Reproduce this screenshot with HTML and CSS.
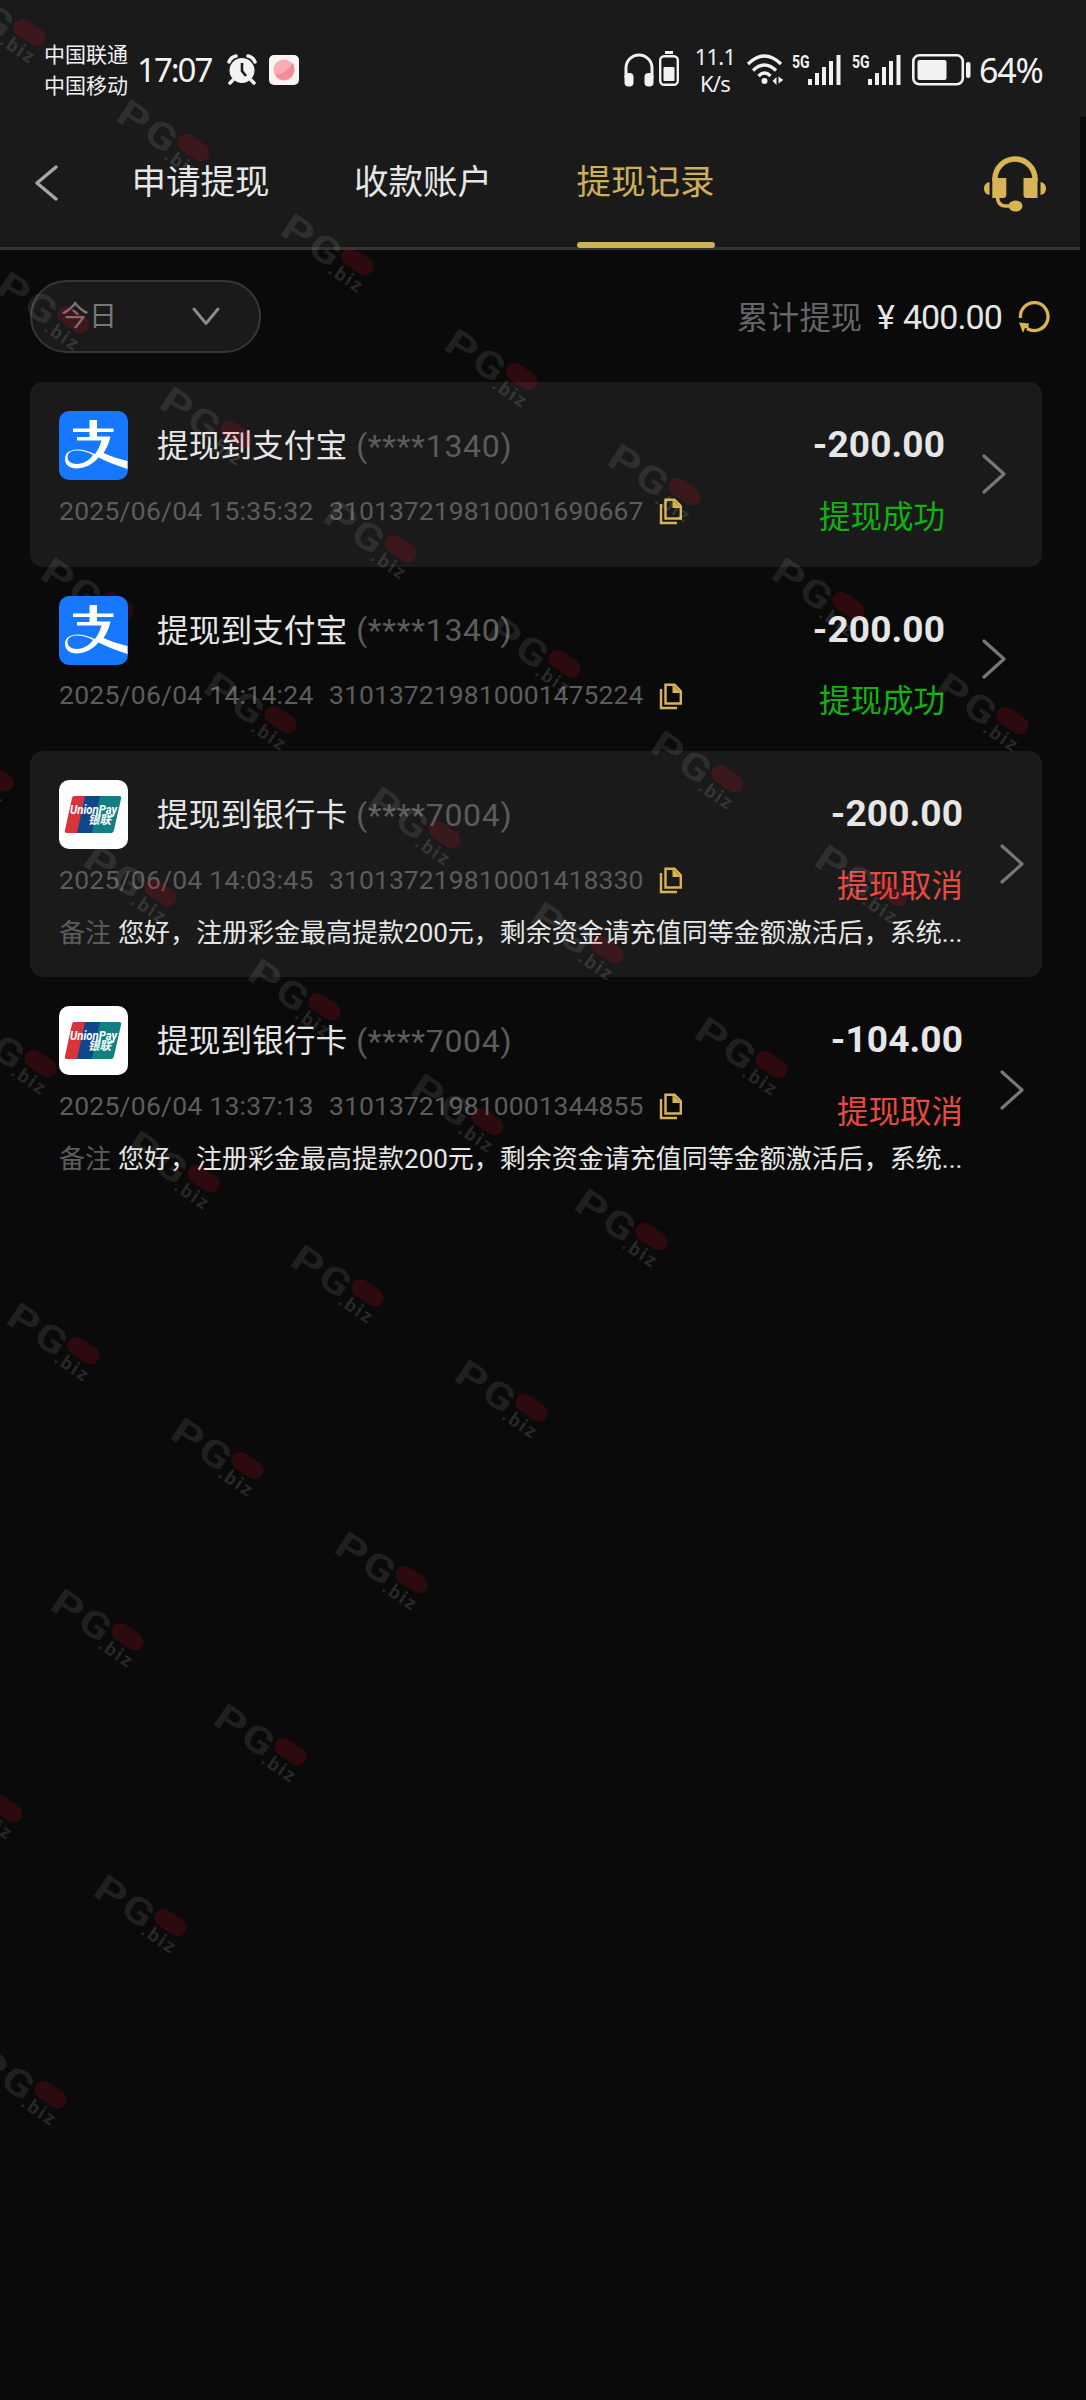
FILE: index.html
```html
<!DOCTYPE html>
<html lang="zh-CN">
<head>
<meta charset="utf-8">
<title>提现记录</title>
<link rel="stylesheet" href="styles.css">
</head>
<body>
<svg class="defs" width="0" height="0" aria-hidden="true">
  <defs>
    <symbol id="copy" viewBox="0 0 24 27"><path d="M2 6v19h16" fill="none" stroke="#d9b454" stroke-width="2.4"/><path d="M6.5 1.8h9l6.3 6.4v12.300H6.500z" fill="none" stroke="#d9b454" stroke-width="2.400"/><path d="M13.500 2v8h8.500z" fill="#d9b454"/></symbol>
    <symbol id="next" viewBox="0 0 24 40"><path d="M2 2l20 18L2 38" fill="none" stroke="#777" stroke-width="3.200" stroke-linecap="round" stroke-linejoin="round"/></symbol>
    <symbol id="alipay" viewBox="0 0 69 69"><rect width="69" height="69" rx="10" fill="#1677ff"/><path d="M30.500 9h7.500v8.500h16.500v3.500H38v4.500h13.500c-1.500 7-4 12-7 16.500 7 3 15 6 24 8v8c-11-3.500-21-7.500-29-11.500-6 7-14 11-22 11-7 0-11.500-4-11.500-9.500 0-6 5-9.500 12-9.500 6 0 12 2 18 4.500 3-4 5-8.500 6.500-13.500H18v-3.500h12.500V21H14v-3.500h16.500zM18 39.500c-6 0-9.500 2.500-9.500 6.500s3.500 7 9.500 7c6.500 0 12-3.500 16-9-5-3-10.500-4.500-16-4.500z" fill="#fff"/></symbol>
    <symbol id="unionpay" viewBox="0 0 69 69"><rect width="69" height="69" rx="10" fill="#fff"/><path d="M15 16h13l-9 37H8q-3 0-2-3l7-32q.5-2 2-2z" fill="#d8343c"/><path d="M26 16h16l-8 37H18z" fill="#11478a"/><path d="M41 16h19q3 0 2 3l-7 31q-.7 3-3 3H33z" fill="#128083"/><text x="11" y="34" textLength="47" lengthAdjust="spacingAndGlyphs" class="up-en">UnionPay</text><text x="29" y="43.500" textLength="23" lengthAdjust="spacingAndGlyphs" class="up-cn">银联</text></symbol>
    <symbol id="signal" viewBox="0 0 33 30"><path d="M0 24h4v6H0zM7 18h4v12H7zM14 12h4v18h-4zM21 6h4v24h-4zM28.500 0h4v30h-4z" fill="#f2f2f2"/></symbol>
    <g id="mark">
      <g transform="translate(-3 -2) rotate(34)">
        <text class="wm-big" transform="scale(1.300 1)" x="-1" y="0">P</text>
        <text class="wm-big" transform="scale(1.220 1)" x="26" y="0">G</text>
        <rect x="63" y="-30" width="35" height="18" rx="9" fill="#ff1028" fill-opacity=".14"/>
        <text class="wm-small" x="61" y="5">.biz</text>
      </g>
    </g>
  </defs>
</svg>

<div class="statusbar">
  <div class="carriers"><span>中国联通</span><span>中国移动</span></div>
  <span class="clock">17:07</span>
  <svg class="alarm" width="30" height="31" viewBox="0 0 30 31"><circle cx="15" cy="16.500" r="12.500" fill="#f2f2f2"/><path d="M2 8q2-5 7-6M28 8q-2-5-7-6" fill="none" stroke="#f2f2f2" stroke-width="3.500" stroke-linecap="round"/><path d="M6 26l-3 3M24 26l3 3" stroke="#f2f2f2" stroke-width="3.500" stroke-linecap="round"/><path d="M15 9v8l4 5" fill="none" stroke="#1a1a1a" stroke-width="2.600"/></svg>
  <svg class="app" width="30" height="30" viewBox="0 0 30 30"><rect width="30" height="30" rx="5" fill="#fbf3f4"/><circle cx="15" cy="15" r="10.500" fill="#f9aeb5"/><path d="M6 20q10 0 18-12 4 9-3 15-8 5-15-3z" fill="#f28c99"/></svg>
  <div class="status-right">
    <svg width="30" height="34" viewBox="0 0 30 34"><path d="M2 25V15a13 13 0 0 1 26 0v10" fill="none" stroke="#f2f2f2" stroke-width="3"/><rect x="0.500" y="20" width="9" height="13.500" rx="4" fill="#f2f2f2"/><rect x="20.500" y="20" width="9" height="13.500" rx="4" fill="#f2f2f2"/></svg>
    <svg class="cell" width="20" height="35" viewBox="0 0 20 35"><path d="M6 1.500h8" stroke="#f2f2f2" stroke-width="3"/><rect x="1.200" y="5.200" width="17.600" height="28.500" rx="4" fill="none" stroke="#f2f2f2" stroke-width="2.400"/><rect x="4.500" y="16" width="11" height="14" rx="1" fill="#f2f2f2"/></svg>
    <div class="speed"><span>11.1</span><span>K/s</span></div>
    <svg class="wifi" width="36" height="31" viewBox="0 0 36 31"><g fill="none" stroke="#f2f2f2" stroke-width="3.300"><path d="M1 10q16.500-16 33 0"/><path d="M6 16.500q11.500-11 23 0"/><path d="M11.500 22q6-6 12 0"/></g><circle cx="17.500" cy="27" r="3" fill="#f2f2f2"/><path d="M25.500 27l4-4v8zM31.500 22.500v7l5-3.500z" fill="#f2f2f2"/></svg>
    <span class="net">5G</span><svg class="bars" width="33" height="30"><use href="#signal"/></svg>
    <span class="net second">5G</span><svg class="bars" width="33" height="30"><use href="#signal"/></svg>
    <svg class="battery" width="60" height="32" viewBox="0 0 60 32"><rect x="1.300" y="1.300" width="49.500" height="29" rx="6" fill="none" stroke="#f2f2f2" stroke-width="2.600"/><rect x="5.500" y="6" width="29" height="20" rx="2" fill="#f2f2f2"/><rect x="54" y="8" width="4.500" height="16" rx="2" fill="#f2f2f2"/></svg>
    <span class="percent">64%</span>
  </div>
</div>

<header class="header">
  <svg class="back" width="23" height="36" viewBox="0 0 23 36"><path d="M21 2L2 18l19 16" fill="none" stroke="#a6a6a6" stroke-width="3.400" stroke-linecap="round" stroke-linejoin="round"/></svg>
  <nav class="tabs">
    <a>申请提现</a>
    <a>收款账户</a>
    <a class="active">提现记录</a>
  </nav>
  <svg class="service" width="62" height="56" viewBox="0 0 62 56" fill="#d9b454"><path d="M11 25v-2a20 20 0 0 1 40 0v2" fill="none" stroke="#d9b454" stroke-width="5.500"/><path d="M8.300 22h14v17q0 3-3 3h-11zM53.500 22h-14v17q0 3 3 3h11z"/><path d="M5.500 26v13Q0 38 0 32.500T5.500 26zM56.500 26v13q5.500-1 5.500-6.500T56.500 26z"/><path d="M13.500 40q0 10 8 10h6" fill="none" stroke="#d9b454" stroke-width="3.500"/><ellipse cx="31.500" cy="50" rx="7" ry="5.500"/></svg>
</header>

<div class="toolbar">
  <div class="filter"><span>今日</span><svg width="28" height="20" viewBox="0 0 28 20"><path d="M2 2l12 14.500L26 2" fill="none" stroke="#8b8b8b" stroke-width="2.900" stroke-linecap="round" stroke-linejoin="round"/></svg></div>
  <div class="total"><span class="label">累计提现</span><span class="yen">¥</span><span class="sum">400.00</span><svg width="32" height="34" viewBox="0 0 32 34"><path d="M2.500 18A13.800 14 0 1 1 9 28.500" fill="none" stroke="#d9b454" stroke-width="3.300"/><path d="M1 22.500l10 1-1 5-3-.5-2 5z" fill="#d9b454"/></svg></div>
</div>

<main class="list">
  <article class="card shaded">
    <div class="body">
      <div class="head"><svg class="logo"><use href="#alipay"/></svg><h3>提现到支付宝</h3><span class="mask">(****1340)</span><b class="amount">-200.00</b></div>
      <div class="meta"><span class="date">2025/06/04 15:35:32</span><span>310137219810001690667</span><svg class="copy"><use href="#copy"/></svg><span class="state ok">提现成功</span></div>
    </div>
    <svg class="next"><use href="#next"/></svg>
  </article>
  <article class="card">
    <div class="body">
      <div class="head"><svg class="logo"><use href="#alipay"/></svg><h3>提现到支付宝</h3><span class="mask">(****1340)</span><b class="amount">-200.00</b></div>
      <div class="meta"><span class="date">2025/06/04 14:14:24</span><span>310137219810001475224</span><svg class="copy"><use href="#copy"/></svg><span class="state ok">提现成功</span></div>
    </div>
    <svg class="next"><use href="#next"/></svg>
  </article>
  <article class="card noted shaded">
    <div class="body">
      <div class="head"><svg class="logo"><use href="#unionpay"/></svg><h3>提现到银行卡</h3><span class="mask">(****7004)</span><b class="amount">-200.00</b></div>
      <div class="meta"><span class="date">2025/06/04 14:03:45</span><span>310137219810001418330</span><svg class="copy"><use href="#copy"/></svg><span class="state cancel">提现取消</span></div>
      <p class="note"><span>备注</span>您好，注册彩金最高提款200元，剩余资金请充值同等金额激活后，系统...</p>
    </div>
    <svg class="next"><use href="#next"/></svg>
  </article>
  <article class="card noted">
    <div class="body">
      <div class="head"><svg class="logo"><use href="#unionpay"/></svg><h3>提现到银行卡</h3><span class="mask">(****7004)</span><b class="amount">-104.00</b></div>
      <div class="meta"><span class="date">2025/06/04 13:37:13</span><span>310137219810001344855</span><svg class="copy"><use href="#copy"/></svg><span class="state cancel">提现取消</span></div>
      <p class="note"><span>备注</span>您好，注册彩金最高提款200元，剩余资金请充值同等金额激活后，系统...</p>
    </div>
    <svg class="next"><use href="#next"/></svg>
  </article>
</main>

<svg class="watermark" width="1086" height="2400" aria-hidden="true">
  <use href="#mark" x="-46" y="7"/><use href="#mark" x="118" y="122"/><use href="#mark" x="282" y="236"/><use href="#mark" x="446" y="351"/><use href="#mark" x="609" y="466"/><use href="#mark" x="773" y="580"/><use href="#mark" x="937" y="695"/>
  <use href="#mark" x="-2" y="294"/><use href="#mark" x="161" y="409"/><use href="#mark" x="325" y="523"/><use href="#mark" x="489" y="638"/><use href="#mark" x="652" y="753"/><use href="#mark" x="816" y="867"/>
  <use href="#mark" x="42" y="580"/><use href="#mark" x="205" y="694"/><use href="#mark" x="369" y="809"/><use href="#mark" x="532" y="924"/><use href="#mark" x="696" y="1039"/>
  <use href="#mark" x="-78" y="752"/><use href="#mark" x="85" y="867"/><use href="#mark" x="249" y="981"/><use href="#mark" x="412" y="1096"/><use href="#mark" x="576" y="1211"/>
  <use href="#mark" x="-35" y="1038"/><use href="#mark" x="128" y="1153"/><use href="#mark" x="292" y="1267"/><use href="#mark" x="456" y="1382"/>
  <use href="#mark" x="8" y="1325"/><use href="#mark" x="172" y="1440"/><use href="#mark" x="336" y="1554"/>
  <use href="#mark" x="52" y="1611"/><use href="#mark" x="215" y="1726"/>
  <use href="#mark" x="-69" y="1783"/><use href="#mark" x="95" y="1897"/>
  <use href="#mark" x="-25" y="2069"/>
</svg>
</body>
</html>
```

FILE: styles.css
```css
* { box-sizing: border-box; }
body {
  margin: 0;
  width: 1086px;
  height: 2400px;
  position: relative;
  overflow: hidden;
  background: #0a0a0a;
  color: #e6e6e6;
  font-family: Roboto, "Noto Sans CJK SC", sans-serif;
  line-height: 1;
}
.defs { position: absolute; }
svg { display: block; flex: none; }
h3, p { margin: 0; font-weight: 400; }

/* phone status bar */
.statusbar {
  display: flex;
  align-items: center;
  height: 117px;
  padding: 22px 43px 0 44px;
  background: #1a1a1a;
  color: #f2f2f2;
}
.carriers { display: flex; flex-direction: column; gap: 10px; margin-top: 2px; font-size: 21px; }
.clock { margin-left: 9px; width: 77px; font: 33px/1 "Noto Sans", sans-serif; letter-spacing: -2px; white-space: nowrap; }
.alarm { margin-left: 13px; }
.app { margin-left: 12px; }
.status-right { display: flex; align-items: center; margin-left: auto; }
.cell { margin-left: 5px; margin-top: -2px; }
.speed { display: flex; flex-direction: column; align-items: center; gap: 5px; width: 40px; margin: 0 -1px 0 16px; font: 22px/1 "Noto Sans", sans-serif; letter-spacing: -0.8px; }
.wifi { margin-left: 13px; }
.net { width: 16px; margin: -16px 0 0 9px; font-size: 18px; font-weight: 700; transform: scaleX(.78); transform-origin: left; }
.net.second { margin-left: 11px; }
.battery { margin-left: 11px; }
.percent { width: 70px; margin-left: 7px; margin-right: -6px; font: 34px/1 "Noto Sans", sans-serif; letter-spacing: -1.2px; }

/* page header */
.header {
  display: flex;
  width: 1080px;
  height: 133px;
  padding: 0 34px 0 35px;
  background: #1a1a1a;
  border-bottom: 3px solid #333;
}
.back { margin-top: 48px; }
.tabs { display: flex; gap: 84.500px; margin-left: 73.500px; font-size: 34.500px; }
.tabs a { padding-top: 48px; height: 131px; }
.tabs .active { color: #ceae58; position: relative; }
.tabs .active::after { content: ""; position: absolute; left: 0; right: 0; bottom: 0; height: 6px; border-radius: 3px; background: #ceae58; }
.service { margin: 39px 0 0 auto; }

/* filter row */
.toolbar { display: flex; justify-content: space-between; align-items: flex-start; padding: 30px 36px 0 30px; height: 132px; }
.filter {
  display: flex;
  align-items: center;
  justify-content: space-between;
  width: 231px;
  height: 73px;
  padding: 1px 39px 0 29px;
  border: 2px solid #363636;
  border-radius: 37px;
  background: #1a1a1a;
  color: #777;
  font-size: 28px;
}
.total { display: flex; align-items: center; height: 74px; font-size: 34px; }
.total .label { margin-top: 3px; font-size: 31.3px; color: #666; }
.yen { margin-left: 15px; }
.sum { margin-left: 8px; letter-spacing: -0.9px; }
.total svg { margin-left: 16px; }

/* records */
.list { width: 1012px; margin-left: 30px; }
.card { display: flex; align-items: center; gap: 37px; height: 184.500px; padding-right: 36px; border-radius: 13px; }
.card.shaded { background: #1a1a1a; }
.card.noted { height: 226px; padding-right: 18px; }
.body { flex: 1; height: 100%; padding: 29px 0 0 29px; }
.head { display: flex; align-items: center; height: 69px; }
.logo { position: relative; z-index: 1; width: 69px; height: 69px; }
.head h3 { margin: 3px 0 0 29px; font-size: 31.7px; }
.mask { margin-left: 9px; font-size: 32px; color: #5c5c5c; letter-spacing: 0.700px; }
.amount { margin-left: auto; font-size: 37px; margin-top: -2px; letter-spacing: 0.1px; }
.meta { display: flex; align-items: center; height: 44px; margin-top: 9px; font-size: 26.500px; color: #5c5c5c; letter-spacing: 0.08px; }
.date { width: 270px; letter-spacing: 0.25px; }
.copy { width: 24px; height: 27px; margin: 1px 0 0 16px; }
.state { margin: 13px 0 0 auto; font-size: 31.500px; letter-spacing: 0; }
.ok { color: #0fb40f; }
.cancel { color: #e84a42; }
.note { margin-top: 18px; font-size: 26px; white-space: nowrap; }
.note span { margin-right: 7px; color: #5c5c5c; }
.next { width: 24px; height: 40px; }
.up-en { font: italic 700 13px Roboto, sans-serif; fill: #fff; }
.up-cn { font: italic 700 12px "Noto Sans CJK SC", sans-serif; fill: #fff; }

/* watermark overlay */
.watermark { position: absolute; left: 0; top: 0; pointer-events: none; }
.wm-big { font: 700 37px Roboto, sans-serif; fill: #fff; fill-opacity: .09; }
.wm-small { font: 700 19px Roboto, sans-serif; letter-spacing: 2px; fill: #fff; fill-opacity: .13; }
```
